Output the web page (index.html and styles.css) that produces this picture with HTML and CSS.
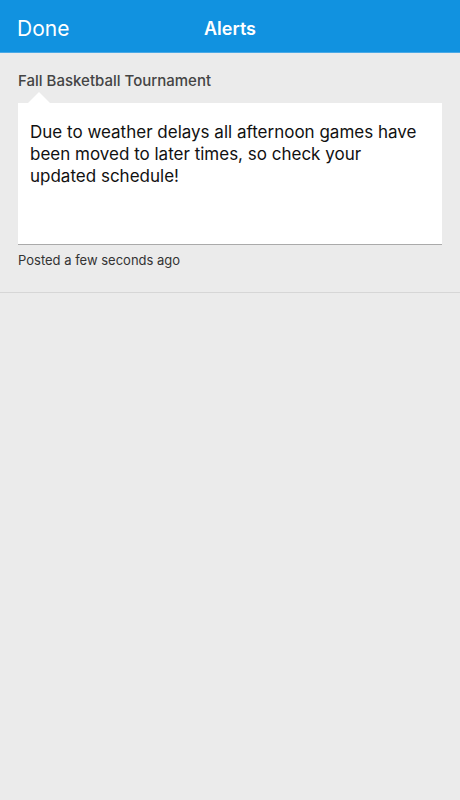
FILE: index.html
```html
<!DOCTYPE html>
<html lang="en">
<head>
    <meta charset="UTF-8">
    <meta name="viewport" content="width=device-width, initial-scale=1.0">
    <title>Alerts</title>
    <link rel="stylesheet" href="styles.css">
</head>
<body>
    <header class="navbar">
        <span class="nav-done">Done</span>
        <h1 class="nav-title">Alerts</h1>
    </header>

    <div class="alert-item">
        <h2 class="alert-title">Fall Basketball Tournament</h2>
        <div class="alert-bubble">
            <p>Due to weather delays all afternoon games have been moved to later times, so check your updated schedule!</p>
        </div>
        <div class="alert-meta">Posted a few seconds ago</div>
    </div>
</body>
</html>
```

FILE: styles.css
```css
body {
    margin: 0;
    font-family: Inter, "Noto Sans", sans-serif;
    background-color: #ebebeb;
    color: #222;
    min-height: 800px;
}

.navbar {
    position: relative;
    height: 52px;
    background-color: #1192e0;
    border-bottom: 1px solid #4aa9e6;
    display: flex;
    align-items: center;
    justify-content: center;
}

.nav-done {
    position: absolute;
    left: 17px;
    top: 16px;
    font-size: 21px;
    color: #fff;
}

.nav-title {
    margin: 0;
    font-size: 18px;
    font-weight: 600;
    color: #fff;
    padding-top: 4px;
}

.alert-item {
    padding: 18px 18px 24px;
    border-bottom: 1px solid #d6d6d6;
}

.alert-title {
    margin: 0 0 13px;
    font-size: 15px;
    font-weight: 500;
    color: #444;
}

.alert-bubble {
    position: relative;
    background: #fff;
    border-bottom: 1px solid #aaa;
    height: 142px;
    padding: 18px 12px 0;
    box-sizing: border-box;
}

.alert-bubble::before {
    content: "";
    position: absolute;
    left: 10px;
    top: -11px;
    border-left: 11px solid transparent;
    border-right: 11px solid transparent;
    border-bottom: 11px solid #fff;
}

.alert-bubble p {
    margin: 0;
    font-size: 17px;
    line-height: 22px;
    color: #111;
}

.alert-meta {
    margin-top: 7px;
    font-size: 13px;
    color: #333;
}
```
